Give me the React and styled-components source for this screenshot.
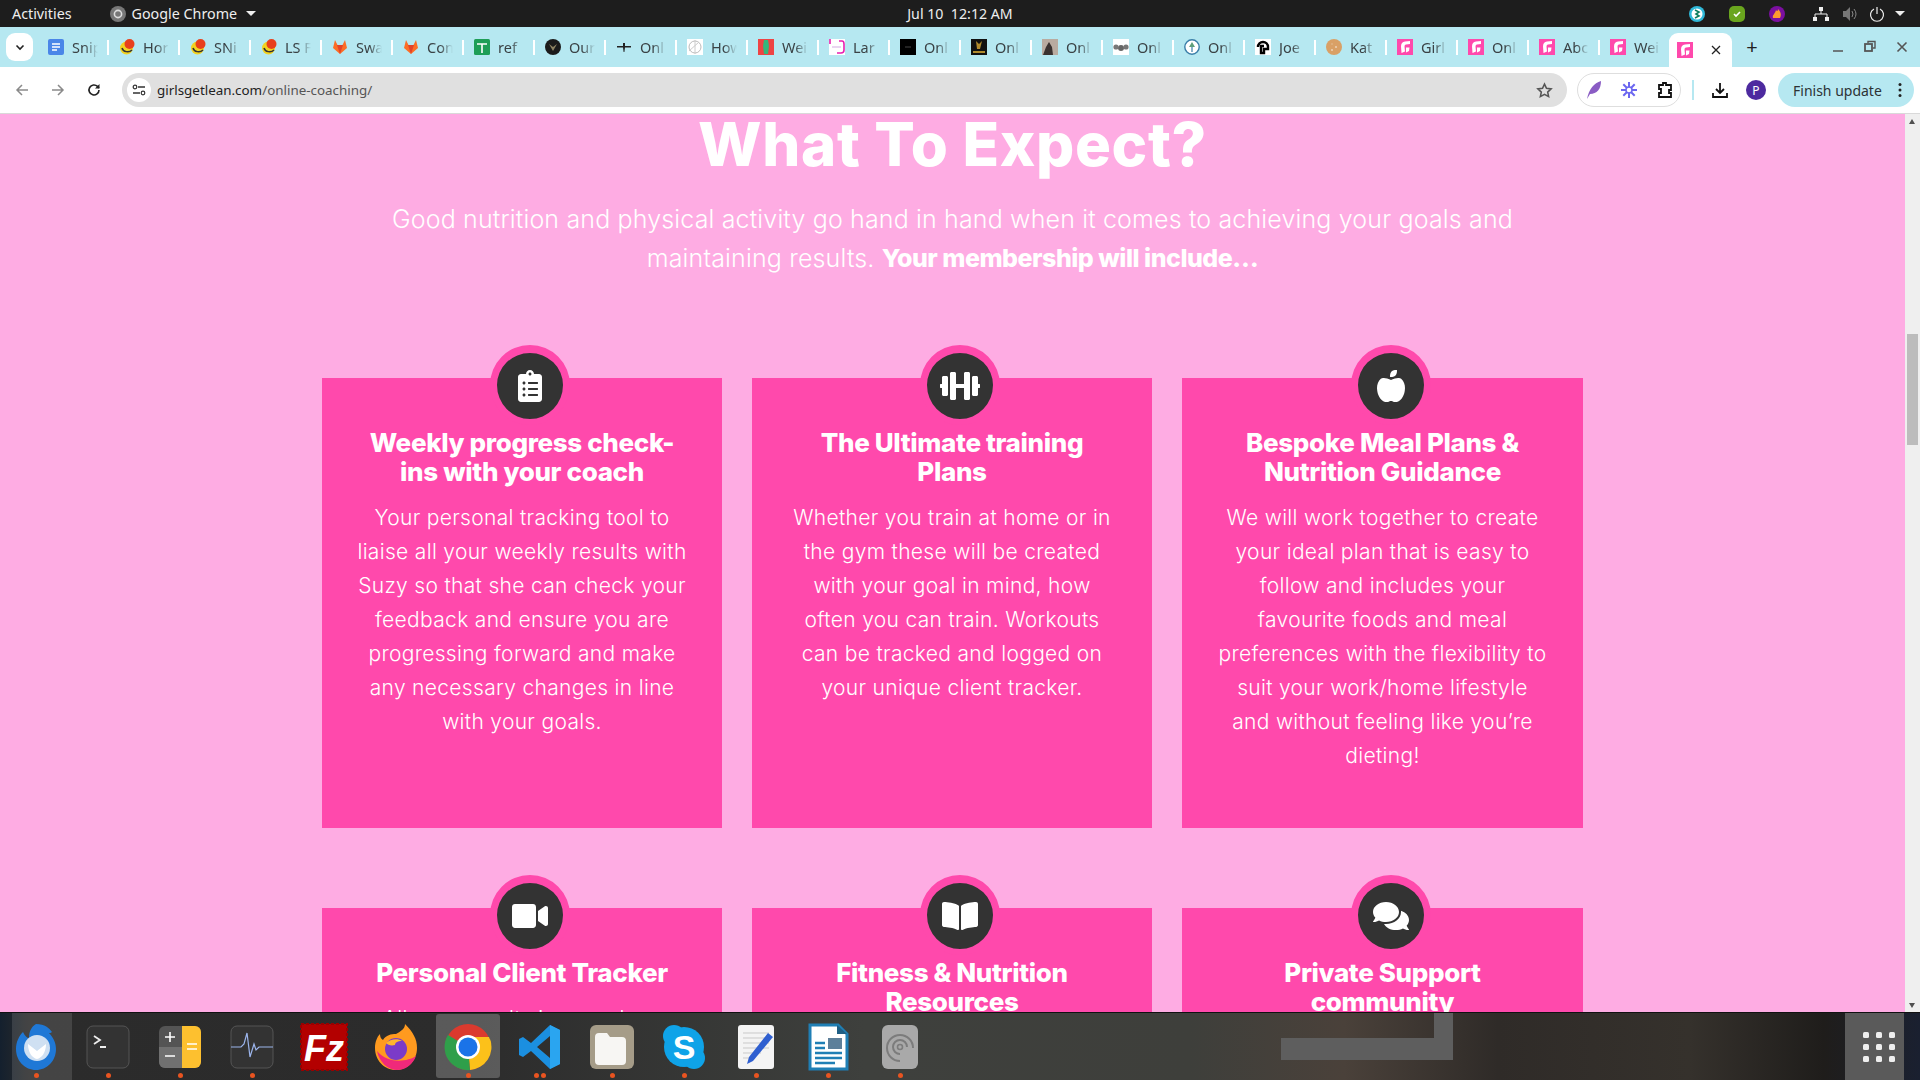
import React from "react";
import styled, { createGlobalStyle } from "styled-components";
import {
  FaClipboardList,
  FaDumbbell,
  FaAppleAlt,
  FaVideo,
  FaBookOpen,
  FaComments,
} from "react-icons/fa";

const GlobalStyle = createGlobalStyle`
  html, body {
    margin: 0;
    height: 100%;
    overflow: hidden;
  }
  * { box-sizing: border-box; }
`;

const Screen = styled.div`
  width: 1920px;
  height: 1080px;
  display: flex;
  flex-direction: column;
  overflow: hidden;
  font-family: "Noto Sans", sans-serif;
`;

/* ---------- gnome top bar ---------- */
const TopBar = styled.div`
  height: 27px;
  flex: none;
  background: #1d1d1d;
  color: #eee;
  font-size: 14.3px;
  display: grid;
  grid-template-columns: 1fr auto 1fr;
  align-items: center;
  padding: 0 12px;
`;
const BarLeft = styled.div`
  display: flex;
  align-items: center;
`;
const AppName = styled.div`
  display: flex;
  align-items: center;
  gap: 6px;
  margin-left: 38px;
`;
const Caret = styled.span`
  width: 0;
  height: 0;
  margin-left: ${({ $gap }) => $gap || 3}px;
  border-left: 5px solid transparent;
  border-right: 5px solid transparent;
  border-top: 5px solid #eee;
`;
const Clock = styled.div`
  font-size: 14.2px;
  white-space: pre;
`;
const Tray = styled.div`
  display: flex;
  align-items: center;
  justify-content: flex-end;
  padding-right: 3px;
`;
const TrayIcon = styled.svg`
  width: 16px;
  height: 16px;
  margin-left: ${({ $gap }) => $gap}px;
`;

/* ---------- chrome tab strip ---------- */
const TabStrip = styled.div`
  height: 40px;
  flex: none;
  background: #b6e8f1;
  display: flex;
  align-items: center;
`;
const TabSwitch = styled.div`
  width: 27px;
  height: 28px;
  margin: 0 5px 0 6px;
  border-radius: 9px;
  background: #fff;
  display: flex;
  align-items: center;
  justify-content: center;
`;
const Tab = styled.div`
  position: relative;
  width: 71px;
  height: 40px;
  flex: none;
  display: flex;
  align-items: center;
  padding-left: 10px;
  gap: 8px;
  &::after {
    content: "";
    position: absolute;
    right: 0;
    top: 13px;
    width: 2px;
    height: 15px;
    background: #fff;
  }
`;
const TabLabel = styled.span`
  width: 26px;
  font-size: 14.5px;
  color: #3a4245;
  overflow: hidden;
  white-space: nowrap;
  -webkit-mask-image: linear-gradient(to right, #000 50%, transparent 100%);
  mask-image: linear-gradient(to right, #000 50%, transparent 100%);
`;
const ActiveTab = styled.div`
  width: 63px;
  height: 34px;
  margin: 6px 0 0 -2px;
  flex: none;
  background: #fff;
  border-radius: 9px 9px 0 0;
  display: flex;
  align-items: center;
  justify-content: space-between;
  padding: 0 11px 0 8px;
`;
const NewTab = styled.div`
  width: 40px;
  text-align: center;
  font-size: 20px;
  color: #222;
  line-height: 40px;
`;
const WindowControls = styled.div`
  margin-left: auto;
  display: flex;
  align-items: center;
  gap: 18px;
  padding-right: 11px;
`;

/* ---------- chrome toolbar ---------- */
const Toolbar = styled.div`
  height: 46px;
  flex: none;
  background: #fff;
  display: flex;
  align-items: center;
  padding: 0 6px 0 4px;
`;
const NavButton = styled.div`
  width: 36px;
  display: flex;
  align-items: center;
  justify-content: center;
  color: ${({ $dim }) => ($dim ? "#8a8a8a" : "#222")};
`;
const Address = styled.div`
  flex: 1;
  height: 34px;
  margin-left: 10px;
  border-radius: 17px;
  background: #e0e0e0;
  display: flex;
  align-items: center;
  padding: 0 14px 0 5px;
  font-size: 13.4px;
`;
const SiteChip = styled.div`
  width: 24px;
  height: 24px;
  border-radius: 50%;
  background: #fff;
  display: flex;
  align-items: center;
  justify-content: center;
`;
const Host = styled.span`
  margin-left: 6px;
  color: #222;
`;
const UrlPath = styled.span`
  color: #555;
`;
const StarSlot = styled.div`
  margin-left: auto;
  display: flex;
`;
const ExtensionPill = styled.div`
  width: 104px;
  height: 34px;
  margin-left: 10px;
  border: 1px solid #dedede;
  border-radius: 17px;
  display: flex;
  align-items: center;
  justify-content: space-between;
  padding: 0 6px 0 8px;
`;
const Divider = styled.div`
  width: 2px;
  height: 20px;
  margin: 0 17px 0 11px;
  background: #b6e8f1;
`;
const DownloadButton = styled.div`
  width: 18px;
  display: flex;
`;
const Avatar = styled.div`
  width: 20px;
  height: 20px;
  margin-left: 17px;
  border-radius: 50%;
  background: #4d2a9f;
  color: #fff;
  font-size: 12px;
  display: flex;
  align-items: center;
  justify-content: center;
`;
const FinishPill = styled.div`
  width: 136px;
  height: 34px;
  margin-left: 12px;
  border-radius: 17px;
  background: #b6e8f1;
  color: #2c3335;
  font-size: 14px;
  display: flex;
  align-items: center;
  justify-content: space-between;
  padding: 0 12px 0 15px;
`;

/* ---------- web page ---------- */
const Viewport = styled.div`
  flex: 1;
  min-height: 0;
  display: flex;
  border-top: 1px solid #d9d9d9;
`;
const Page = styled.main`
  flex: 1;
  min-width: 0;
  overflow: hidden;
  background: #feace3;
  color: #fff;
  font-family: Inter, "Open Sans", sans-serif;
  text-align: center;
`;
const Title = styled.h1`
  margin: 0;
  font-size: 60px;
  line-height: 60px;
  font-weight: 800;
  letter-spacing: 0.65px;
`;
const Intro = styled.p`
  margin: 26px 0 100px;
  font-size: 25px;
  line-height: 39px;
  font-weight: 300;
  letter-spacing: 0.15px;
  b {
    font-weight: 800;
    letter-spacing: -0.5px;
  }
`;
const CardGrid = styled.div`
  width: 1261px;
  margin: 0 auto;
  display: grid;
  grid-template-columns: 400px 400px 401px;
  column-gap: 30px;
  row-gap: 80px;
`;
const Card = styled.article`
  position: relative;
  height: 450px;
  padding-top: 50px;
  background: #ff49ac;
`;
const IconBadge = styled.div`
  position: absolute;
  top: -33px;
  left: calc(50% - 32px);
  width: 80px;
  height: 80px;
  border-radius: 50%;
  border-style: solid;
  border-color: #ff49ac;
  border-width: 8px 7px 6px;
  background: #333;
  display: flex;
  align-items: center;
  justify-content: center;
  color: #fff;
  font-size: ${({ $size }) => $size}px;
`;
const CardTitle = styled.h3`
  margin: 0 0 15px;
  font-size: 26px;
  line-height: 29px;
  font-weight: 800;
  letter-spacing: -0.35px;
`;
const CardBody = styled.p`
  margin: 0;
  font-size: 21px;
  line-height: 34px;
  font-weight: 300;
  letter-spacing: 0.32px;
`;

/* ---------- scrollbar ---------- */
const ScrollTrack = styled.div`
  position: relative;
  width: 15px;
  flex: none;
  background: #efefef;
`;
const ScrollThumb = styled.div`
  position: absolute;
  top: 220px;
  left: 2px;
  width: 11px;
  height: 111px;
  background: #bcbcbc;
`;
const ScrollArrow = styled.span`
  position: absolute;
  left: 4px;
  ${({ $down }) => ($down ? "bottom: 4px;" : "top: 5px;")}
  width: 0;
  height: 0;
  border-left: 3.5px solid transparent;
  border-right: 3.5px solid transparent;
  ${({ $down }) =>
    $down ? "border-top: 5px solid #505050;" : "border-bottom: 5px solid #505050;"}
`;

/* ---------- dock ---------- */
const Dock = styled.div`
  height: 68px;
  flex: none;
  border-top: 1px solid #111;
  display: flex;
  align-items: stretch;
  padding-left: 0;
  background:
    linear-gradient(#5e5e5e, #5e5e5e) 1281px 25px / 172px 22px no-repeat,
    linear-gradient(#5e5e5e, #5e5e5e) 1434px 0 / 19px 25px no-repeat,
    linear-gradient(90deg, #14202e 0, #2b2b2b 1.5%, #2c2c2c 25%, #3e403d 45%, #3e3f3b 62%, #4a413a 70%, #2f2b28 78%, #35312c 88%, #1f1d1b 95%, #1a2030 100%);
`;
const DockItem = styled.div`
  position: relative;
  width: 72px;
  flex: none;
  display: flex;
  align-items: flex-start;
  justify-content: center;
  padding-top: 10px;
  &::before {
    content: "";
    position: absolute;
    top: ${({ $first }) => ($first ? "0" : "1px")};
    bottom: ${({ $first }) => ($first ? "0" : "2px")};
    left: ${({ $first }) => ($first ? "12px" : "4px")};
    right: ${({ $first }) => ($first ? "0" : "4px")};
    background: ${({ $active, $first }) =>
      $active ? "rgba(255,255,255,.22)" : $first ? "rgba(255,255,255,.12)" : "transparent"};
    border-radius: ${({ $first }) => ($first ? "0" : "3px")};
  }
  svg {
    position: relative;
  }
`;
const DotRow = styled.div`
  position: absolute;
  bottom: 2px;
  left: 0;
  right: 0;
  display: flex;
  justify-content: center;
  gap: 2px;
`;
const Dot = styled.span`
  width: 5px;
  height: 5px;
  border-radius: 50%;
  background: #e95420;
`;
const AppGrid = styled.div`
  width: 59px;
  margin-left: auto;
  margin-right: 16px;
  padding-right: 9px;
  background: #5a5a5a;
  display: grid;
  grid-template-columns: repeat(3, 6px);
  grid-auto-rows: 6px;
  gap: 6px 7px;
  align-content: center;
  justify-content: end;
  span {
    background: #eee;
    border-radius: 1.5px;
  }
`;

const Favicon = ({ kind }) => {
  const box = { width: 16, height: 16, viewBox: "0 0 16 16", style: { flex: "none" } };
  switch (kind) {
    case "doc":
      return (
        <svg {...box}>
          <rect width="16" height="16" rx="2" fill="#4a86e8" />
          <path d="M4 5h8M4 8h8M4 11h5" stroke="#fff" strokeWidth="1.4" />
        </svg>
      );
    case "sun":
    case "sun14":
      return (
        <svg {...box}>
          <circle cx="7.5" cy="9" r="6.5" fill="#f2d21f" />
          <path d="M3 9c1 4 7 5 10 2" stroke="#333" strokeWidth="1.5" fill="none" />
          <circle cx="10.5" cy="5" r="5" fill="#e8401c" />
        </svg>
      );
    case "gitlab":
      return (
        <svg {...box}>
          <path d="M8 15L1 9l2-8 2.5 5h5L13 1l2 8z" fill="#fc6d26" />
          <path d="M8 15L5 6h6z" fill="#e24329" />
        </svg>
      );
    case "plus":
      return (
        <svg {...box}>
          <rect width="16" height="16" rx="1.5" fill="#1e9e57" />
          <path d="M3 5h10M8 5v9" stroke="#fff" strokeWidth="1.6" />
        </svg>
      );
    case "shield":
      return (
        <svg {...box}>
          <circle cx="8" cy="8" r="8" fill="#1b1b1b" />
          <path d="M4 5l4 7 4-7-4 3z" fill="#8d8262" />
        </svg>
      );
    case "plane":
      return (
        <svg {...box}>
          <path d="M1 7h14v1.6H9L8.4 13H7.6L7 8.6H1z" fill="#222" />
          <path d="M7 4h2v3H7z" fill="#222" />
        </svg>
      );
    case "line":
      return (
        <svg {...box}>
          <rect width="16" height="16" fill="#fff" />
          <circle cx="8" cy="8" r="6" fill="none" stroke="#bbb" />
          <path d="M8 1v14M2 12L12 3" stroke="#ccc" />
        </svg>
      );
    case "body":
      return (
        <svg {...box}>
          <rect width="16" height="16" fill="#ee4444" />
          <path d="M6 1h4l1 6-1 8H6L5 7z" fill="#34b77c" />
        </svg>
      );
    case "lar":
      return (
        <svg {...box}>
          <rect width="16" height="16" fill="#fff" />
          <path d="M1 0v5M10 2h3q2 0 2 3v6q0 3-3 3H8" stroke="#e91eb0" strokeWidth="1.6" fill="none" />
          <path d="M3 8h9" stroke="#e9d5f0" strokeWidth="2" />
        </svg>
      );
    case "black":
      return (
        <svg {...box}>
          <rect width="16" height="16" fill="#000" />
          <path d="M5 8h6" stroke="#444" />
        </svg>
      );
    case "gold":
      return (
        <svg {...box}>
          <rect width="16" height="16" fill="#111" />
          <path d="M5 2l3 3 3-3-2 8H6zM2 12h12v2H2z" fill="#b08a2c" />
        </svg>
      );
    case "photo":
      return (
        <svg {...box}>
          <rect width="16" height="16" fill="#b9aba0" />
          <path d="M1 16l3-8 3-5 3 5 1 8z" fill="#3a3230" />
        </svg>
      );
    case "wings":
      return (
        <svg {...box}>
          <rect width="16" height="16" fill="#fff" />
          <circle cx="8" cy="9" r="3" fill="#666" />
          <circle cx="3" cy="8" r="2.6" fill="#777" />
          <circle cx="13" cy="8" r="2.6" fill="#777" />
        </svg>
      );
    case "tree":
      return (
        <svg {...box}>
          <circle cx="8" cy="8" r="7.2" fill="#fff" stroke="#3a7ea8" strokeWidth="1.4" />
          <path d="M8 3l3 5H5z" fill="#5f9f7a" />
          <path d="M7.4 8h1.2v5H7.4z" fill="#3a7ea8" />
        </svg>
      );
    case "joe":
      return (
        <svg {...box}>
          <rect width="16" height="16" fill="#fff" />
          <path d="M3 8a5 5 0 1 1 10 0v2H9v4H6V7h3" fill="none" stroke="#000" strokeWidth="2.4" />
        </svg>
      );
    case "cookie":
      return (
        <svg {...box}>
          <circle cx="8" cy="8" r="8" fill="#d9a066" />
          <circle cx="6" cy="5" r="1" fill="#fff3" />
          <circle cx="10" cy="8" r="1" fill="#fff8" />
          <circle cx="6" cy="11" r="1" fill="#fff8" />
        </svg>
      );
    default:
      return (
        <svg {...box}>
          <rect width="16" height="16" fill="#ff49ac" />
          <path d="M13 2L8 2.5Q4 3 4 7.5L4.5 14 8 12.5 7.5 7.5Q7.5 5.5 9 5.5L13 5zM9 8.5h3.5l-.5 3.5L9 13.5z" fill="#fff" />
        </svg>
      );
  }
};

const tabs = [
  ["doc", "Snip"], ["sun", "Hor"], ["sun", "SNi"], ["sun14", "LS F"], ["gitlab", "Swa"],
  ["gitlab", "Con"], ["plus", "ref"], ["shield", "Our"], ["plane", "Onl"], ["line", "How"],
  ["body", "Wei"], ["lar", "Lar"], ["black", "Onl"], ["gold", "Onl"], ["photo", "Onl"],
  ["wings", "Onl"], ["tree", "Onl"], ["joe", "Joe"], ["cookie", "Kat"], ["g", "Girl"],
  ["g", "Onl"], ["g", "Abc"], ["g", "Wei"],
];

// iconSize is the svg box: these icons fill its width, so wide ones need a bigger box
const cards = [
  {
    icon: <FaClipboardList />,
    iconSize: 32,
    title: ["Weekly progress check-", "ins with your coach"],
    body: [
      "Your personal tracking tool to",
      "liaise all your weekly results with",
      "Suzy so that she can check your",
      "feedback and ensure you are",
      "progressing forward and make",
      "any necessary changes in line",
      "with your goals.",
    ],
  },
  {
    icon: <FaDumbbell />,
    iconSize: 40,
    title: ["The Ultimate training", "Plans"],
    body: [
      "Whether you train at home or in",
      "the gym these will be created",
      "with your goal in mind, how",
      "often you can train. Workouts",
      "can be tracked and logged on",
      "your unique client tracker.",
    ],
  },
  {
    icon: <FaAppleAlt />,
    iconSize: 32,
    title: ["Bespoke Meal Plans &", "Nutrition Guidance"],
    body: [
      "We will work together to create",
      "your ideal plan that is easy to",
      "follow and includes your",
      "favourite foods and meal",
      "preferences with the flexibility to",
      "suit your work/home lifestyle",
      "and without feeling like you’re",
      "dieting!",
    ],
  },
  {
    icon: <FaVideo />,
    iconSize: 36,
    title: ["Personal Client Tracker"],
    body: ["All your results in one place"],
  },
  { icon: <FaBookOpen />, iconSize: 36, title: ["Fitness & Nutrition", "Resources"], body: [] },
  { icon: <FaComments />, iconSize: 36, title: ["Private Support", "community"], body: [] },
];

const withBreaks = (lines) =>
  lines.map((line, i) => (
    <React.Fragment key={i}>
      {line}
      {i < lines.length - 1 && <br />}
    </React.Fragment>
  ));

const dockIcon = { width: 48, height: 48, viewBox: "0 0 48 48" };

const dockApps = [
  {
    dots: 1,
    first: true,
    art: (
      <svg {...dockIcon}>
        <path d="M24 1c9 0 13 4 16 8-1 1-2 1-3 1 5 5 7 11 7 16 0 12-9 21-20 21S4 38 4 26C4 19 7 13 11 9c2 4 4 6 6 6 0-6 2-11 7-14z" fill="#1f78d6" />
        <circle cx="25" cy="25" r="13" fill="#cfe0f2" />
        <path d="M16 21l9 7 9-7c0 8-4 14-9 15-5-1-9-7-9-15z" fill="#fff" />
      </svg>
    ),
  },
  {
    dots: 1,
    art: (
      <svg {...dockIcon}>
        <rect x="3" y="3" width="42" height="42" rx="6" fill="#333" stroke="#555" />
        <path d="M10 13l6 4-6 4M16 24h6" stroke="#eee" strokeWidth="1.8" fill="none" />
      </svg>
    ),
  },
  {
    dots: 1,
    art: (
      <svg {...dockIcon}>
        <rect x="3" y="3" width="42" height="42" rx="6" fill="#545454" />
        <path d="M26 3h13a6 6 0 0 1 6 6v30a6 6 0 0 1-6 6H26z" fill="#fdc02f" />
        <path d="M3 24h23v21H9a6 6 0 0 1-6-6z" fill="#707070" />
        <path d="M9 14h10M14 9v10M9 33h10M31 21h10M31 26h10" stroke="#fff" strokeWidth="1.6" />
      </svg>
    ),
  },
  {
    dots: 1,
    art: (
      <svg {...dockIcon}>
        <rect x="3" y="3" width="42" height="42" rx="6" fill="#333" stroke="#555" />
        <path d="M3 24h10l3-3 3-11 3 24 4-13 2 6 3-3h14" stroke="#9cb5ec" strokeWidth="1.2" fill="none" />
      </svg>
    ),
  },
  {
    dots: 0,
    art: (
      <svg {...dockIcon}>
        <rect x="1" y="1" width="46" height="46" fill="#b30000" stroke="#900" strokeDasharray="3 2" strokeWidth="2" />
        <text x="24" y="38" textAnchor="middle" fill="#fff" fontSize="36" fontWeight="700" fontStyle="italic" fontFamily="Liberation Sans, sans-serif">Fz</text>
      </svg>
    ),
  },
  {
    dots: 0,
    art: (
      <svg {...dockIcon}>
        <path d="M33 1c8 8 12 15 12 24 0 12-9 22-21 22S3 37 3 25c0-6 2-11 5-14 0 3 1 5 3 6 3-5 8-6 13-6 5-3 9-5 9-10z" fill="#ff9a1f" />
        <path d="M5 28c2 11 11 19 20 19 9 0 16-6 19-14-9 6-28 8-39-5z" fill="#f0297a" />
        <circle cx="24" cy="26" r="11" fill="#7b3bc8" />
        <path d="M14 20c4-4 12-5 16-2-5 0-7 2-7 4-4 1-7 0-9-2z" fill="#ffb52e" />
      </svg>
    ),
  },
  {
    dots: 1,
    active: true,
    art: (
      <svg {...dockIcon}>
        <circle cx="24" cy="24" r="23" fill="#db3a2e" />
        <path d="M24 24L46 16a23 23 0 0 1-20 31z" fill="#fcc11a" />
        <path d="M24 24l2 23A23 23 0 0 1 4 12z" fill="#2f9f4a" />
        <path d="M24 14h21A23 23 0 0 1 47 24H24z" fill="#fcc11a" />
        <circle cx="24" cy="24" r="12" fill="#fff" />
        <circle cx="24" cy="24" r="9.5" fill="#1a73e8" />
      </svg>
    ),
  },
  {
    dots: 2,
    art: (
      <svg {...dockIcon}>
        <path d="M34 2l10 5v34l-10 5-19-18-8 6-4-2V16l4-2 8 6zM34 13L21 24l13 11z" fill="#1b8fe0" />
        <path d="M34 2l10 5v34l-10 5z" fill="#2aa5f0" />
      </svg>
    ),
  },
  {
    dots: 1,
    art: (
      <svg {...dockIcon}>
        <rect x="2" y="2" width="44" height="44" rx="6" fill="#a59c88" />
        <path d="M7 14a4 4 0 0 1 4-4h8l3 4h12a4 4 0 0 1 4 4v20a4 4 0 0 1-4 4H11a4 4 0 0 1-4-4z" fill="#f7f6f3" />
      </svg>
    ),
  },
  {
    dots: 1,
    art: (
      <svg {...dockIcon}>
        <circle cx="24" cy="24" r="20" fill="#0fa3e8" />
        <circle cx="14" cy="13" r="11" fill="#0fa3e8" />
        <circle cx="34" cy="35" r="11" fill="#0fa3e8" />
        <text x="24" y="36" textAnchor="middle" fill="#fff" fontSize="34" fontWeight="700" fontFamily="Liberation Sans, sans-serif">S</text>
      </svg>
    ),
  },
  {
    dots: 1,
    art: (
      <svg {...dockIcon}>
        <rect x="6" y="2" width="36" height="44" rx="3" fill="#f4f4f4" />
        <path d="M11 10h26M11 15h26M11 20h26M11 25h26M11 30h18M11 35h12" stroke="#c9c9c9" />
        <path d="M36 10l5 4-20 24-6 3 2-7z" fill="#2f5fd0" />
      </svg>
    ),
  },
  {
    dots: 1,
    art: (
      <svg {...dockIcon}>
        <path d="M6 2h28l9 9v35H6z" fill="#fff" stroke="#1f7fb5" strokeWidth="3" />
        <path d="M33 2l10 9H33z" fill="#1f5f85" />
        <rect x="24" y="15" width="14" height="11" fill="#5d7f9a" />
        <path d="M11 20h10M11 25h10M11 30h27M11 35h27M11 40h20" stroke="#1f7fb5" strokeWidth="2.4" />
      </svg>
    ),
  },
  {
    dots: 1,
    art: (
      <svg {...dockIcon}>
        <rect x="6" y="2" width="36" height="44" rx="6" fill="#a9a9a9" />
        <path d="M24 38a13 13 0 1 1 13-13M24 31a7 7 0 1 1 7-7" fill="none" stroke="#7c7c7c" strokeWidth="2" />
        <circle cx="24" cy="24" r="2.5" fill="none" stroke="#7c7c7c" strokeWidth="1.6" />
      </svg>
    ),
  },
];

const App = () => (
  <Screen>
    <GlobalStyle />
    <TopBar>
      <BarLeft>
        Activities
        <AppName>
          <svg width="16" height="16" viewBox="0 0 16 16">
            <circle cx="8" cy="8" r="8" fill="#777" />
            <circle cx="8" cy="8" r="3.6" fill="none" stroke="#ddd" strokeWidth="1.6" />
          </svg>
          Google Chrome
          <Caret />
        </AppName>
      </BarLeft>
      <Clock>Jul 10  12:12 AM</Clock>
      <Tray>
        <TrayIcon $gap={0} viewBox="0 0 16 16">
          <circle cx="8" cy="8" r="8" fill="#2fb8d8" />
          <circle cx="8" cy="8" r="5.5" fill="#fff" />
          <path d="M6 4l4 2-3 2 3 2-4 2" stroke="#0d7f5f" strokeWidth="1.6" fill="none" />
        </TrayIcon>
        <TrayIcon $gap={24} viewBox="0 0 16 16">
          <rect width="16" height="16" rx="5" fill="#6aa51e" />
          <path d="M5 8l2 2 4-4" stroke="#fff" strokeWidth="1.6" fill="none" />
        </TrayIcon>
        <TrayIcon $gap={24} viewBox="0 0 16 16">
          <circle cx="8" cy="8" r="8" fill="#7b0fa0" />
          <path d="M4 12c-1-3 2-4 3-8 1 2 2 1 2-1 2 2 4 5 2 9z" fill="#ff9a2e" />
        </TrayIcon>
        <TrayIcon $gap={28} viewBox="0 0 16 16">
          <path d="M6 1h4v4H6zM0 11h4v4H0zM12 11h4v4h-4z" fill="#eee" />
          <path d="M8 5v3M2 11V8h12v3" stroke="#eee" fill="none" />
        </TrayIcon>
        <TrayIcon $gap={13} viewBox="0 0 16 16">
          <path d="M1 5h3l4-4v14l-4-4H1z" fill="#777" />
          <path d="M10 5q2 3 0 6M12 3q4 5 0 10" stroke="#888" fill="none" />
        </TrayIcon>
        <TrayIcon $gap={11} viewBox="0 0 16 16">
          <path d="M5 3a6.5 6.5 0 1 0 6 0M8 1v7" stroke="#eee" strokeWidth="1.2" fill="none" />
        </TrayIcon>
        <Caret $gap={10} />
      </Tray>
    </TopBar>

    <TabStrip>
      <TabSwitch>
        <svg width="12" height="12" viewBox="0 0 12 12">
          <path d="M2.5 4.5L6 8l3.5-3.5" stroke="#222" strokeWidth="1.6" fill="none" />
        </svg>
      </TabSwitch>
      {tabs.map(([kind, label], i) => (
        <Tab key={i}>
          <Favicon kind={kind} />
          <TabLabel>{label}</TabLabel>
        </Tab>
      ))}
      <ActiveTab>
        <Favicon kind="g" />
        <svg width="10" height="10" viewBox="0 0 10 10">
          <path d="M1 1l8 8M9 1L1 9" stroke="#222" strokeWidth="1.3" />
        </svg>
      </ActiveTab>
      <NewTab>+</NewTab>
      <WindowControls>
        <svg width="14" height="14" viewBox="0 0 14 14">
          <path d="M2 11h10" stroke="#555" strokeWidth="1.5" />
        </svg>
        <svg width="14" height="14" viewBox="0 0 14 14">
          <path d="M5 3V1.5h7V8h-2" stroke="#555" strokeWidth="1.4" fill="none" />
          <rect x="2" y="4" width="7" height="7" fill="none" stroke="#555" strokeWidth="1.8" />
        </svg>
        <svg width="14" height="14" viewBox="0 0 14 14">
          <path d="M2.5 2.5l9 9M11.5 2.5l-9 9" stroke="#555" strokeWidth="1.6" />
        </svg>
      </WindowControls>
    </TabStrip>

    <Toolbar>
      <NavButton $dim>
        <svg width="16" height="16" viewBox="0 0 16 16">
          <path d="M14 8H3M8 3L3 8l5 5" stroke="currentColor" strokeWidth="1.5" fill="none" />
        </svg>
      </NavButton>
      <NavButton $dim>
        <svg width="16" height="16" viewBox="0 0 16 16">
          <path d="M2 8h11M8 3l5 5-5 5" stroke="currentColor" strokeWidth="1.5" fill="none" />
        </svg>
      </NavButton>
      <NavButton>
        <svg width="16" height="16" viewBox="0 0 16 16">
          <path d="M13 8a5 5 0 1 1-1.5-3.6L13 6" stroke="currentColor" strokeWidth="1.6" fill="none" />
          <path d="M13.5 2v4.5H9z" fill="currentColor" />
        </svg>
      </NavButton>
      <Address>
        <SiteChip>
          <svg width="14" height="14" viewBox="0 0 14 14">
            <path d="M6 4h7M1 10h7" stroke="#333" strokeWidth="1.3" />
            <circle cx="3" cy="4" r="1.8" fill="none" stroke="#333" strokeWidth="1.2" />
            <circle cx="11" cy="10" r="1.8" fill="none" stroke="#333" strokeWidth="1.2" />
          </svg>
        </SiteChip>
        <Host>girlsgetlean.com</Host>
        <UrlPath>/online-coaching/</UrlPath>
        <StarSlot>
          <svg width="17" height="17" viewBox="0 0 24 24">
            <path d="M12 3l2.8 6 6.5.8-4.8 4.4 1.3 6.4L12 17.4l-5.8 3.2 1.3-6.4-4.8-4.4 6.5-.8z" fill="none" stroke="#555" strokeWidth="2.2" />
          </svg>
        </StarSlot>
      </Address>
      <ExtensionPill>
        <svg width="16" height="20" viewBox="0 0 16 20">
          <path d="M1 19C3 9 8 3 15 1c0 8-4 13-11 13z" fill="#8a5cc4" />
        </svg>
        <svg width="18" height="18" viewBox="0 0 18 18">
          <g stroke="#6b66f0" strokeWidth="2">
            <path d="M9 1v16M1 9h16M3.3 3.3l11.4 11.4M14.7 3.3L3.3 14.7" />
          </g>
          <circle cx="9" cy="9" r="3" fill="#fff" stroke="#6b66f0" strokeWidth="1.5" />
        </svg>
        <svg width="18" height="18" viewBox="0 0 18 18">
          <path d="M3 4h4V2h3v2h5v5h-2v3h2v4H3v-4h2V8H3z" fill="none" stroke="#111" strokeWidth="1.8" />
        </svg>
      </ExtensionPill>
      <Divider />
      <DownloadButton>
        <svg width="18" height="18" viewBox="0 0 18 18">
          <path d="M9 2v9M5 8l4 4 4-4M2 12v4h14v-4" stroke="#111" strokeWidth="1.8" fill="none" />
        </svg>
      </DownloadButton>
      <Avatar>P</Avatar>
      <FinishPill>
        Finish update
        <svg width="4" height="16" viewBox="0 0 4 16">
          <circle cx="2" cy="2.5" r="1.5" fill="#222" />
          <circle cx="2" cy="8" r="1.5" fill="#222" />
          <circle cx="2" cy="13.5" r="1.5" fill="#222" />
        </svg>
      </FinishPill>
    </Toolbar>

    <Viewport>
      <Page>
        <Title>What To Expect?</Title>
        <Intro>
          Good nutrition and physical activity go hand in hand when it comes to achieving your goals and
          <br />
          maintaining results. <b>Your membership will include…</b>
        </Intro>
        <CardGrid>
          {cards.map((card) => (
            <Card key={card.title[0]}>
              <IconBadge $size={card.iconSize}>{card.icon}</IconBadge>
              <CardTitle>{withBreaks(card.title)}</CardTitle>
              <CardBody>{withBreaks(card.body)}</CardBody>
            </Card>
          ))}
        </CardGrid>
      </Page>
      <ScrollTrack>
        <ScrollArrow />
        <ScrollThumb />
        <ScrollArrow $down />
      </ScrollTrack>
    </Viewport>

    <Dock>
      {dockApps.map((app, i) => (
        <DockItem key={i} $active={app.active} $first={app.first}>
          {app.art}
          <DotRow>
            {Array.from({ length: app.dots }).map((_, d) => (
              <Dot key={d} />
            ))}
          </DotRow>
        </DockItem>
      ))}
      <AppGrid>
        {Array.from({ length: 9 }).map((_, i) => (
          <span key={i} />
        ))}
      </AppGrid>
    </Dock>
  </Screen>
);

export default App;
